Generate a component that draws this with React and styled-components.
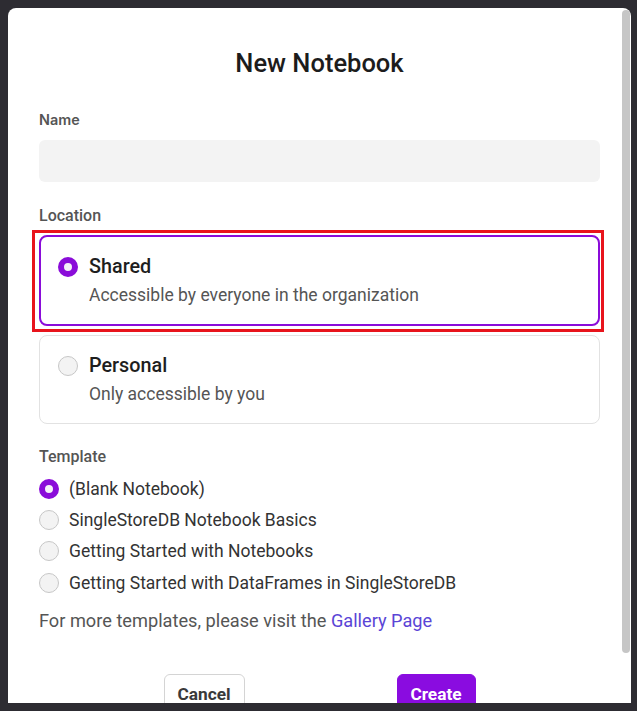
import styled, { createGlobalStyle } from 'styled-components';

const GlobalStyle = createGlobalStyle`
    html, body {
        margin: 0;
        padding: 0;
        background: #2d2c32;
        overflow: hidden;
    }
    body {
        font-family: Roboto, "Liberation Sans", sans-serif;
    }
`;

const Backdrop = styled.div`
    width: 637px;
    height: 711px;
    padding: 8px 0 0 8px;
    box-sizing: border-box;
`;

const Modal = styled.div`
    display: flex;
    width: 623px;
    height: 695px;
    background: #ffffff;
    border-radius: 8px 8px 0 0;
    overflow: hidden;
`;

const Content = styled.div`
    flex: 1;
    min-width: 0;
    padding: 39px 22px 45px 31px;
`;

const ScrollTrack = styled.div`
    flex: none;
    display: flex;
    flex-direction: column;
    width: 9px;
    padding-top: 2px;
    box-sizing: border-box;
`;

const ScrollThumb = styled.span`
    display: block;
    width: 8px;
    height: 643px;
    border-radius: 4px;
    background-color: #c6c6c6;
`;

const Title = styled.h1`
    margin: 0 0 31px;
    text-align: center;
    font-family: Roboto, "Liberation Sans", sans-serif;
    font-weight: 500;
    font-size: 25.5px;
    line-height: 32px;
    color: #1c1c1c;
`;

const Label = styled.div`
    font-family: ${p => p.$inter ? 'Inter, "Liberation Sans", sans-serif' : 'Roboto, "Liberation Sans", sans-serif'};
    font-weight: ${p => p.$inter ? 600 : 500};
    font-size: ${p => p.$inter ? '14.4px' : '16px'};
    line-height: 20px;
    color: #555555;
`;

const Input = styled.div`
    height: 42px;
    margin: 10px 0 24px;
    background: #f3f3f3;
    border-radius: 6px;
`;

const Cards = styled.div`
    display: flex;
    flex-direction: column;
    gap: 9px;
    margin: 9px 0 23px;
`;

const Highlight = styled.div`
    margin: -5px -4px -6px -7px;
    padding: 2px 1px 3px 4px;
    border: 3px solid #e8141c;
`;

const Card = styled.div`
    display: flex;
    gap: 11px;
    border: ${p => p.$active ? '2px solid #8a0cd9' : '1px solid #e2e2e2'};
    border-radius: 8px;
    padding: ${p => p.$active ? '18px 19px 17px 17px' : '18px 20px 17px 18px'};
    background: #ffffff;
`;

const Radio = styled.span`
    flex: none;
    width: 20px;
    height: 20px;
    margin-top: 2px;
    border-radius: 50%;
    box-sizing: border-box;
    background: ${p => p.$checked ? '#f4f0f8' : '#f3f3f3'};
    border: ${p => p.$checked ? '6.5px solid #8a0cd9' : '1px solid #c7c7c7'};
`;

const CardText = styled.div`
    display: flex;
    flex-direction: column;
    gap: 4px;
`;

const CardTitle = styled.div`
    font-size: 19.8px;
    font-weight: 500;
    line-height: 24px;
    color: #1e1e1e;
`;

const CardSub = styled.div`
    font-size: 17.5px;
    line-height: 24px;
    color: #555555;
`;

const Options = styled.div`
    display: flex;
    flex-direction: column;
    margin-top: 6px;
`;

const Option = styled.div`
    display: flex;
    align-items: center;
    gap: 10px;
    height: 31.3px;
    font-size: 17.5px;
    color: #333333;

    ${Radio} {
        margin-top: 0;
    }
`;

const Hint = styled.p`
    margin: 11px 0 0;
    font-size: 18.2px;
    line-height: 24px;
    color: #555555;
`;

const Link = styled.a`
    color: #5a45d6;
    text-decoration: none;
`;

const Footer = styled.div`
    display: flex;
    justify-content: center;
    gap: 152px;
    margin-top: 41px;
`;

const Button = styled.button`
    height: 40px;
    padding: 0 12px;
    border-radius: 6px;
    font-family: Roboto, "Liberation Sans", sans-serif;
    font-weight: 700;
    font-size: 17.3px;
    border: ${p => p.$primary ? '1px solid #8a0ce0' : '1px solid #d4d4d4'};
    background: ${p => p.$primary ? '#8a0ce0' : '#ffffff'};
    color: ${p => p.$primary ? '#ffffff' : '#3a3a3a'};
    width: ${p => p.$primary ? '79px' : '81px'};
`;

const templates = [
    '(Blank Notebook)',
    'SingleStoreDB Notebook Basics',
    'Getting Started with Notebooks',
    'Getting Started with DataFrames in SingleStoreDB',
];

const App = () => {
    return <>
        <GlobalStyle />
        <Backdrop>
            <Modal>
                <Content>
                    <Title>New Notebook</Title>
                    <Label $inter>Name</Label>
                    <Input />
                    <Label>Location</Label>
                    <Cards>
                        <Highlight>
                            <Card $active>
                                <Radio $checked />
                                <CardText>
                                    <CardTitle>Shared</CardTitle>
                                    <CardSub>Accessible by everyone in the organization</CardSub>
                                </CardText>
                            </Card>
                        </Highlight>
                        <Card>
                            <Radio />
                            <CardText>
                                <CardTitle>Personal</CardTitle>
                                <CardSub>Only accessible by you</CardSub>
                            </CardText>
                        </Card>
                    </Cards>
                    <Label>Template</Label>
                    <Options>
                        {templates.map((t, i) =>
                            <Option key={t}>
                                <Radio $checked={i === 0} />
                                {t}
                            </Option>
                        )}
                    </Options>
                    <Hint>For more templates, please visit the <Link>Gallery Page</Link></Hint>
                    <Footer>
                        <Button>Cancel</Button>
                        <Button $primary>Create</Button>
                    </Footer>
                </Content>
                <ScrollTrack>
                    <ScrollThumb />
                </ScrollTrack>
            </Modal>
        </Backdrop>
    </>
}

export default App;
